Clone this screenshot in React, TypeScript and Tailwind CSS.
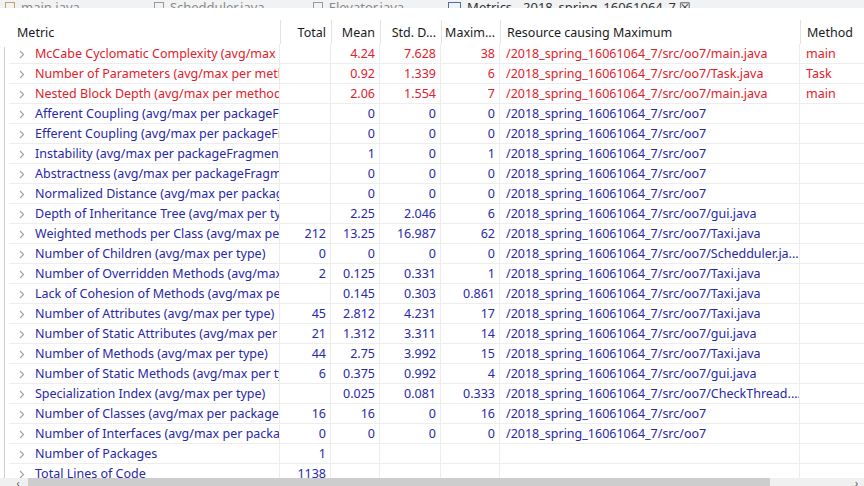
import React from 'react';

type Row = {
  name: string;
  total: string;
  mean: string;
  std: string;
  max: string;
  res: string;
  method: string;
  red?: boolean;
};

const P = '/2018_spring_16061064_7/src/oo7';

const rows: Row[] = [
  { name: 'McCabe Cyclomatic Complexity (avg/max per method)', total: '', mean: '4.24', std: '7.628', max: '38', res: `${P}/main.java`, method: 'main', red: true },
  { name: 'Number of Parameters (avg/max per method)', total: '', mean: '0.92', std: '1.339', max: '6', res: `${P}/Task.java`, method: 'Task', red: true },
  { name: 'Nested Block Depth (avg/max per method)', total: '', mean: '2.06', std: '1.554', max: '7', res: `${P}/main.java`, method: 'main', red: true },
  { name: 'Afferent Coupling (avg/max per packageFragment)', total: '', mean: '0', std: '0', max: '0', res: P, method: '' },
  { name: 'Efferent Coupling (avg/max per packageFragment)', total: '', mean: '0', std: '0', max: '0', res: P, method: '' },
  { name: 'Instability (avg/max per packageFragment)', total: '', mean: '1', std: '0', max: '1', res: P, method: '' },
  { name: 'Abstractness (avg/max per packageFragment)', total: '', mean: '0', std: '0', max: '0', res: P, method: '' },
  { name: 'Normalized Distance (avg/max per packageFragment)', total: '', mean: '0', std: '0', max: '0', res: P, method: '' },
  { name: 'Depth of Inheritance Tree (avg/max per type)', total: '', mean: '2.25', std: '2.046', max: '6', res: `${P}/gui.java`, method: '' },
  { name: 'Weighted methods per Class (avg/max per type)', total: '212', mean: '13.25', std: '16.987', max: '62', res: `${P}/Taxi.java`, method: '' },
  { name: 'Number of Children (avg/max per type)', total: '0', mean: '0', std: '0', max: '0', res: `${P}/Schedduler.ja...`, method: '' },
  { name: 'Number of Overridden Methods (avg/max per type)', total: '2', mean: '0.125', std: '0.331', max: '1', res: `${P}/Taxi.java`, method: '' },
  { name: 'Lack of Cohesion of Methods (avg/max per type)', total: '', mean: '0.145', std: '0.303', max: '0.861', res: `${P}/Taxi.java`, method: '' },
  { name: 'Number of Attributes (avg/max per type)', total: '45', mean: '2.812', std: '4.231', max: '17', res: `${P}/Taxi.java`, method: '' },
  { name: 'Number of Static Attributes (avg/max per type)', total: '21', mean: '1.312', std: '3.311', max: '14', res: `${P}/gui.java`, method: '' },
  { name: 'Number of Methods (avg/max per type)', total: '44', mean: '2.75', std: '3.992', max: '15', res: `${P}/Taxi.java`, method: '' },
  { name: 'Number of Static Methods (avg/max per type)', total: '6', mean: '0.375', std: '0.992', max: '4', res: `${P}/gui.java`, method: '' },
  { name: 'Specialization Index (avg/max per type)', total: '', mean: '0.025', std: '0.081', max: '0.333', res: `${P}/CheckThread....`, method: '' },
  { name: 'Number of Classes (avg/max per packageFragment)', total: '16', mean: '16', std: '0', max: '16', res: P, method: '' },
  { name: 'Number of Interfaces (avg/max per packageFragment)', total: '0', mean: '0', std: '0', max: '0', res: P, method: '' },
  { name: 'Number of Packages', total: '1', mean: '', std: '', max: '', res: '', method: '' },
  { name: 'Total Lines of Code', total: '1138', mean: '', std: '', max: '', res: '', method: '' },
];

const Chevron = () => (
  <svg width="6" height="9" viewBox="0 0 6 9" className="shrink-0">
    <path d="M1 1l3.5 3.5L1 8" fill="none" stroke="#a3a3a3" strokeWidth="1.2" />
  </svg>
);

const numCell = 'shrink-0 border-r border-[#ececec] text-right pr-[4px] pt-[2px] overflow-hidden whitespace-nowrap';

export default function App() {
  return (
    <div
      className="w-[864px] h-[486px] overflow-hidden bg-white flex flex-col text-[12.5px] leading-none"
      style={{ fontFamily: '"Noto Sans", "Noto Sans CJK SC", sans-serif' }}
    >
      {/* cropped editor tab strip */}
      <div className="h-[8px] shrink-0 bg-[#f1f2f4] overflow-hidden flex items-end text-[#8a8a8a] text-[13px]">
        <div className="flex items-center gap-[24px] -mb-[6px] pl-[5px] whitespace-nowrap">
          <span className="flex items-center gap-[6px]"><span className="w-[10px] h-[11px] border border-[#c8a060]" />main.java</span>
          <span className="flex items-center gap-[6px] ml-[50px]"><span className="w-[10px] h-[11px] border border-[#999]" />Schedduler.java</span>
          <span className="flex items-center gap-[6px] ml-[24px]"><span className="w-[10px] h-[11px] border border-[#999]" />Elevator.java</span>
          <span className="flex items-center gap-[6px] ml-[20px] text-[#333]"><span className="w-[13px] h-[11px] border border-[#4a6fa8]" />Metrics - 2018_spring_16061064_7 ☒</span>
        </div>
      </div>
      <div className="h-[12px] shrink-0" />

      {/* header */}
      <div className="flex h-[24px] shrink-0 text-[#1a1a1a] items-stretch">
        <div className="w-[281px] shrink-0 border-r border-[#e3e3e3] pl-[17px] pt-[3px] flex items-center">Metric</div>
        <div className="w-[51px] shrink-0 border-r border-[#e3e3e3] pr-[5px] pt-[3px] flex items-center justify-end">Total</div>
        <div className="w-[49px] shrink-0 border-r border-[#e3e3e3] pr-[5px] pt-[3px] flex items-center justify-end">Mean</div>
        <div className="w-[61px] shrink-0 border-r border-[#e3e3e3] pr-[5px] pt-[3px] flex items-center justify-end">Std. D...</div>
        <div className="w-[59px] shrink-0 border-r border-[#e3e3e3] pr-[5px] pt-[3px] flex items-center justify-end">Maxim...</div>
        <div className="w-[300px] shrink-0 border-r border-[#e3e3e3] pl-[6px] pt-[3px] flex items-center">Resource causing Maximum</div>
        <div className="w-[120px] shrink-0 pl-[6px] pt-[3px] flex items-center">Method</div>
      </div>

      {/* body */}
      <div className="flex flex-1 min-h-0">
        <div className="w-[4px] shrink-0" />
        <div className="w-[1px] shrink-0 mt-[3px] bg-[#cfcfcf]" />
        <div className="w-[4px] shrink-0" />
        <div className="flex-1 min-w-0 overflow-hidden">
          {rows.map((r) => (
            <div
              key={r.name}
              className={`flex h-[20px] border-b border-[#ededed] items-center ${r.red ? 'text-[#e2212b]' : 'text-[#2828aa]'}`}
            >
              <div className="w-[271px] h-full shrink-0 border-r border-[#ececec] flex items-center gap-[10px] pl-[10px] pt-[2px] overflow-hidden whitespace-nowrap">
                <Chevron />
                <span>{r.name}</span>
              </div>
              <div className={`w-[51px] h-full flex items-center justify-end ${numCell}`}>{r.total}</div>
              <div className={`w-[49px] h-full flex items-center justify-end ${numCell}`}>{r.mean}</div>
              <div className={`w-[61px] h-full flex items-center justify-end ${numCell}`}>{r.std}</div>
              <div className={`w-[59px] h-full flex items-center justify-end ${numCell}`}>{r.max}</div>
              <div className="w-[300px] h-full shrink-0 border-r border-[#ececec] pl-[6px] pt-[2px] flex items-center overflow-hidden whitespace-nowrap">{r.res}</div>
              <div className="w-[120px] h-full shrink-0 pl-[6px] pt-[2px] flex items-center">{r.method}</div>
            </div>
          ))}
        </div>
      </div>

      {/* horizontal scrollbar */}
      <div className="h-[8px] shrink-0 flex bg-[#f0f0f0] overflow-hidden">
        <div className="w-[28px] shrink-0 flex items-start justify-center pl-[8px] text-[#606060] text-[10px] leading-none">‹</div>
        <div className="w-[742px] shrink-0 bg-[#cdcdcd]" />
        <div className="flex-1 flex items-start justify-end pr-[6px] text-[#505050] text-[10px] leading-none">›</div>
      </div>
    </div>
  );
}
